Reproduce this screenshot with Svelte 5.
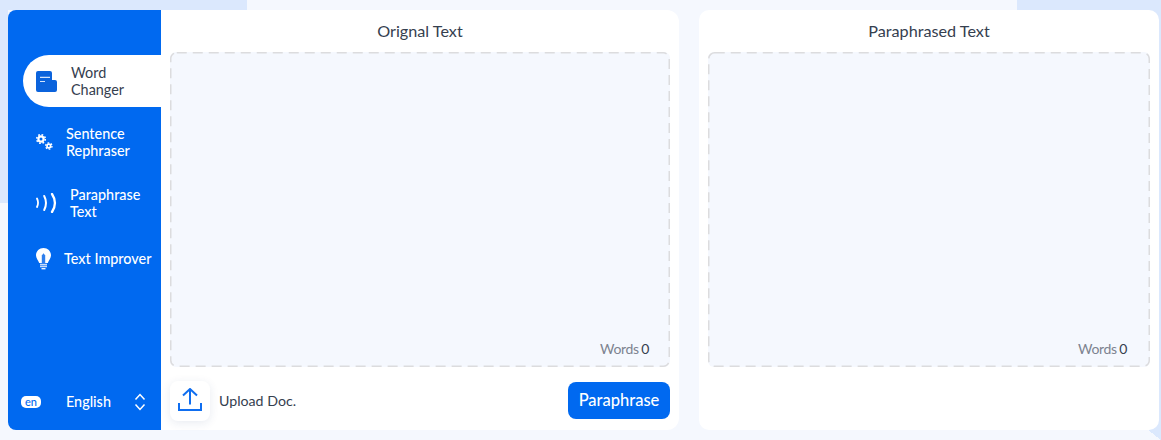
<script lang="ts">
  const tools = [
    { id: 'word', lines: ['Word', 'Changer'], active: true },
    { id: 'sentence', lines: ['Sentence', 'Rephraser'] },
    { id: 'paraphrase', lines: ['Paraphrase', 'Text'] },
    { id: 'improver', lines: ['Text Improver'] },
  ];
</script>

<div class="page">
  <div class="shape-top"></div>
  <div class="shape-left"></div>
  <div class="shape-right"></div>
  <div class="shape-corner"></div>

  <div class="layout">
    <aside class="sidebar">
      <nav class="nav">
        {#each tools as tool}
          <a class="nav-item {tool.id}" class:active={tool.active} href="#{tool.id}">
            <span class="nav-icon">
              {#if tool.id === 'word'}
                <svg width="21" height="21" viewBox="0 0 21 21">
                  <path d="M2 0h12a2 2 0 0 1 2 2v7h3a2 2 0 0 1 2 2v8a2 2 0 0 1-2 2H2a2 2 0 0 1-2-2V2a2 2 0 0 1 2-2z" fill="#0b63dc" />
                  <path d="M4 6.300h10M4 10.500h5" stroke="#d4e4fb" stroke-width="1.200" fill="none" />
                </svg>
              {:else if tool.id === 'sentence'}
                <svg width="17" height="16" viewBox="0 0 17 16" fill="none" stroke="#fff">
                  <circle cx="5" cy="5" r="2.600" stroke-width="2.200" />
                  <circle cx="5" cy="5" r="4.300" stroke-width="1.600" stroke-dasharray="1.690 1.690" />
                  <circle cx="12.800" cy="12" r="1.800" stroke-width="1.700" />
                  <circle cx="12.800" cy="12" r="3.200" stroke-width="1.300" stroke-dasharray="1.680 1.680" />
                </svg>
              {:else if tool.id === 'paraphrase'}
                <svg width="21" height="20" viewBox="0 0 21 20" fill="none" stroke="#fff" stroke-linecap="round">
                  <path d="M1 5.500c1.400 2.800 1.400 5.700 0 8.500" stroke-width="1.800" />
                  <path d="M8.200 3c2.300 4.500 2.300 9.500 0 14" stroke-width="2" />
                  <path d="M16 1c3.800 5.800 3.800 12.200 0 18" stroke-width="2.300" />
                </svg>
              {:else}
                <svg width="15" height="22" viewBox="0 0 15 22">
                  <path d="M7.500 0C3.300 0 0 3.200 0 7.200c0 3.100 2.200 4.800 3.200 7.800h8.600c1-3 3.200-4.700 3.200-7.800C15 3.200 11.700 0 7.500 0z" fill="#fff" />
                  <path d="M5.800 15V7.500l1.700-2.300 1.700 2.300V15z" fill="#2f7fec" />
                  <path d="M4 16.500h7M4 18.500h7" stroke="#c6dbfa" stroke-width="1.300" />
                  <path d="M5.500 20.700h4" stroke="#fff" stroke-width="1.300" />
                </svg>
              {/if}
            </span>
            <span class="nav-label">
              {#each tool.lines as line}
                <span>{line}</span>
              {/each}
            </span>
          </a>
        {/each}
      </nav>

      <div class="language">
        <span class="lang-code">en</span>
        <span class="lang-name">English</span>
        <svg width="12" height="18" viewBox="0 0 12 18" fill="none" stroke="#fff" stroke-width="1.500">
          <path d="M1.500 6.500 6 1.500l4.500 5" />
          <path d="M1.500 11.500 6 16.500l4.500-5" />
        </svg>
      </div>
    </aside>

    <section class="panel original">
      <h2>Orignal Text</h2>
      <div class="textbox">
        <svg class="dashes" width="100%" height="100%" aria-hidden="true">
          <rect x="0.750" y="0.750" rx="6" />
        </svg>
        <p class="count">Words <b>0</b></p>
      </div>
      <div class="actions">
        <button class="upload" aria-label="Upload document">
          <svg width="24" height="24" viewBox="0 0 24 24" fill="none" stroke="#0f6ef0" stroke-width="2">
            <path d="M12 16.500V1.500M5 7.500l7-6.500 7 6.500" />
            <path d="M1 15V22H23V15" />
          </svg>
        </button>
        <span class="upload-label">Upload Doc.</span>
        <button class="submit">Paraphrase</button>
      </div>
    </section>

    <section class="panel result">
      <h2>Paraphrased Text</h2>
      <div class="textbox">
        <svg class="dashes" width="100%" height="100%" aria-hidden="true">
          <rect x="0.750" y="0.750" rx="6" />
        </svg>
        <p class="count">Words <b>0</b></p>
      </div>
    </section>
  </div>
</div>

<style>
  :global(body) {
    background: #f5f8fe;
  }

  .page {
    position: relative;
    height: 440px;
    overflow: hidden;
    font-family: Lato, sans-serif;
    color: #35404f;
  }

  .shape-top {
    position: absolute;
    top: 0;
    left: 0;
    width: 247px;
    height: 10px;
    background: #dbe8fd;
  }

  .shape-left {
    position: absolute;
    top: 0;
    left: 0;
    width: 8px;
    height: 203px;
    background: #dbe8fd;
  }

  .shape-right {
    position: absolute;
    top: 0;
    left: 1017px;
    right: 0;
    height: 430px;
    background: #dbe8fd;
  }

  .shape-corner {
    position: absolute;
    left: 1148px;
    top: 430px;
    width: 13px;
    height: 10px;
    background: linear-gradient(to top right, transparent 50%, #dbe8fd 50%);
  }

  .layout {
    position: relative;
    display: flex;
    height: 420px;
    margin: 10px 2px 10px 8px;
  }

  .sidebar {
    width: 153px;
    flex: none;
    display: flex;
    flex-direction: column;
    justify-content: space-between;
    background: #0069f0;
    border-radius: 8px 0 0 8px;
  }

  .nav {
    display: flex;
    flex-direction: column;
    padding: 45px 0 0 15px;
  }

  .nav-item {
    display: flex;
    align-items: center;
    height: 52px;
    margin-bottom: 9px;
    color: #fff;
    font-size: 14.4px;
    font-weight: 500;
    line-height: 17px;
    text-decoration: none;
  }

  .nav-item.active {
    background: #fff;
    border-radius: 26px 0 0 26px;
    color: #35404f;
    font-weight: 400;
  }

  .nav-item.improver {
    height: 41px;
  }

  .nav-icon {
    width: 21px;
    margin-left: 13px;
    display: flex;
    flex: none;
  }

  .nav-label {
    display: flex;
    flex-direction: column;
    margin-left: 14px;
  }

  .nav-item.sentence .nav-label {
    margin-left: 9px;
  }

  .nav-item.paraphrase .nav-label {
    margin-left: 13px;
  }

  .nav-item.improver .nav-label {
    margin-left: 7px;
    white-space: nowrap;
  }

  .language {
    display: flex;
    align-items: center;
    height: 20px;
    margin-bottom: 18px;
    padding: 0 15px 0 13px;
    color: #fff;
    font-size: 14.4px;
    font-weight: 500;
  }

  .lang-code {
    width: 20px;
    height: 12px;
    border-radius: 5px;
    background: #fff;
    color: #0069f0;
    font-size: 11px;
    line-height: 12px;
    text-align: center;
  }

  .lang-name {
    flex: 1;
    margin: 0 0 1px 25px;
  }

  .panel {
    display: flex;
    flex-direction: column;
    box-sizing: border-box;
    background: #fff;
  }

  .original {
    width: 518px;
    padding: 0 9px;
    border-radius: 0 12px 12px 0;
  }

  .result {
    width: 460px;
    margin-left: 20px;
    padding: 0 9px;
    border-radius: 10px;
  }

  h2 {
    margin: 0;
    height: 42px;
    font-size: 16.2px;
    font-weight: 400;
    line-height: 41px;
    text-align: center;
  }

  .textbox {
    position: relative;
    height: 315px;
    display: flex;
    align-items: flex-end;
    justify-content: flex-end;
    box-sizing: border-box;
    padding: 0 21px 10px 0;
    background: #f5f8fe;
    border-radius: 6px;
  }

  .result .textbox {
    padding-right: 23px;
  }

  .dashes {
    position: absolute;
    inset: 0;
    fill: none;
    stroke: #dcdcde;
    stroke-width: 1.500;
    stroke-dasharray: 10 6;
  }

  .dashes rect {
    width: calc(100% - 1.500px);
    height: calc(100% - 1.500px);
  }

  .count {
    margin: 0;
    font-size: 14px;
    line-height: 17px;
    color: #7d8390;
    letter-spacing: -0.3px;
  }

  .count b {
    margin-left: -1px;
    font-weight: 400;
    color: #35404f;
  }

  .actions {
    display: flex;
    align-items: center;
    margin-top: 14px;
  }

  .upload {
    width: 40px;
    height: 40px;
    padding: 0;
    display: flex;
    align-items: center;
    justify-content: center;
    background: #fff;
    border: 0;
    border-radius: 8px;
    box-shadow: 0 2px 10px rgba(30, 60, 120, 0.1);
  }

  .upload svg {
    margin-bottom: 2px;
  }

  .upload-label {
    margin: 0 0 1px 9px;
    font-size: 14.2px;
    flex: 1;
  }

  .submit {
    width: 102px;
    height: 37px;
    margin-bottom: 2px;
    padding: 0;
    background: #0069f0;
    border: 0;
    border-radius: 8px;
    color: #fff;
    font-family: inherit;
    font-size: 16.5px;
    font-weight: 500;
  }
</style>
